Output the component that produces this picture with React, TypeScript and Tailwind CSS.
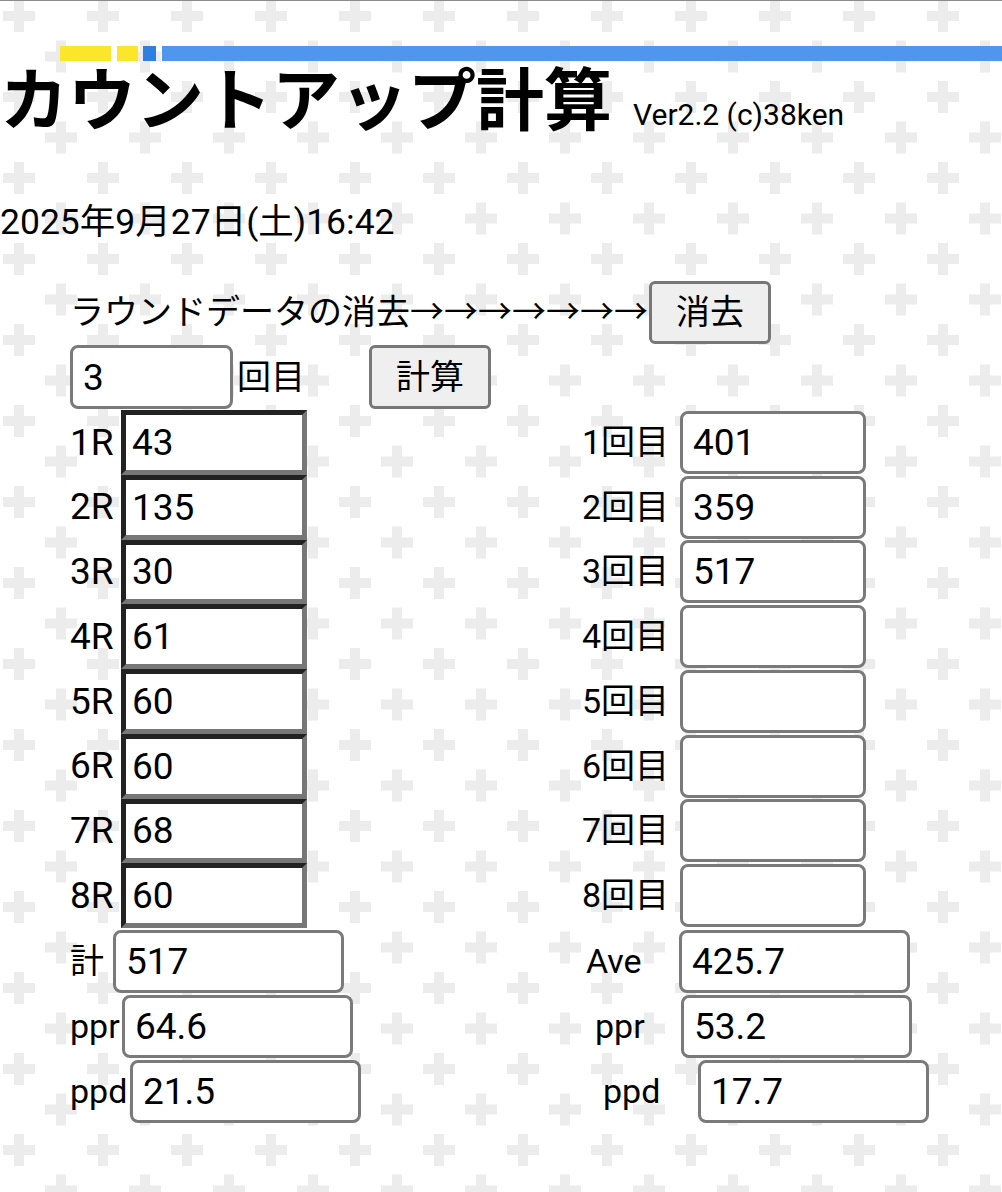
const rounds = ["43", "135", "30", "61", "60", "60", "68", "60"];
const games = ["401", "359", "517", "", "", "", "", ""];

const font = "font-['Roboto','Noto_Sans_CJK_JP',sans-serif]";

function RoundBox({ value }: { value: string }) {
  return (
    <input
      readOnly
      value={value}
      className="box-border h-full w-[186px] border-[5px] border-t-[#222] border-l-[#222] border-r-[#777] border-b-[#777] bg-white pl-[6px] text-[37px] outline-none"
    />
  );
}

function Box({ value, w }: { value: string; w: string }) {
  return (
    <input
      readOnly
      value={value}
      className={`box-border h-[63px] ${w} rounded-[8px] border-[3px] border-[#7a7a7a] bg-white pl-[10px] text-[37px] outline-none`}
    />
  );
}

export default function App() {
  return (
    <div className={`relative min-h-[1192px] overflow-hidden bg-white text-black ${font}`}>
      <svg className="absolute inset-0 h-full w-full" aria-hidden="true">
        <defs>
          <pattern id="plus" width="84" height="81" patternUnits="userSpaceOnUse">
            <rect x="3" y="11" width="32" height="10" fill="#ececec" />
            <rect x="14" y="0" width="10" height="32" fill="#ececec" />
            <rect x="45" y="51.5" width="32" height="10" fill="#ececec" />
            <rect x="56" y="40.5" width="10" height="32" fill="#ececec" />
          </pattern>
        </defs>
        <rect width="100%" height="100%" fill="url(#plus)" />
      </svg>

      <div className="relative">
        <div className="h-px bg-[#8c8c8c]" />

        {/* header stripes */}
        <div className="mt-[45px] flex h-[15px] pl-[60px]">
          <div className="w-[51px] bg-[#fbe62a]" />
          <div className="ml-[6px] w-[21px] bg-[#fbe62a]" />
          <div className="ml-[5px] w-[13px] bg-[#2f7fe3]" />
          <div className="ml-[6px] flex-1 bg-[#5196ee]" />
        </div>

        <div className="mt-px flex items-baseline">
          <h1 className="font-['Noto_Sans_CJK_JP',sans-serif] text-[68px] leading-[67px] font-bold">
            カウントアップ計算
          </h1>
          <span className="ml-[21px] text-[30px]">Ver2.2 (c)38ken</span>
        </div>

        <div className="mt-[65px] text-[35.5px] leading-[40px]">2025年9月27日(土)16:42</div>

        <div className="pl-[70px]">
          <div className="mt-[39px] flex h-[63px] items-center text-[34px]">
            ラウンドデータの消去→→→→→→→
            <button className="ml-[1px] h-[63px] w-[122px] rounded-[6px] border-[3px] border-[#777] bg-[#efefef] text-[34px]">
              消去
            </button>
          </div>

          <div className="mt-px flex h-[64px] items-center text-[34px]">
            <input
              readOnly
              value="3"
              className="box-border h-[64px] w-[163px] rounded-[8px] border-[3px] border-[#7a7a7a] bg-white pl-[10px] text-[37px] outline-none"
            />
            <span className="ml-[4px]">回目</span>
            <button className="ml-[64px] h-[64px] w-[122px] rounded-[6px] border-[3px] border-[#777] bg-[#efefef] text-[34px]">
              計算
            </button>
          </div>

          <div className="mt-px">
            {rounds.map((r, i) => (
              <div key={i} className="flex h-[64.75px]">
                <div className="flex w-[512px] items-center">
                  <span className="w-[51px] text-[37px]">{i + 1}R</span>
                  <RoundBox value={r} />
                </div>
                <div className="flex items-center">
                  <span className="w-[98px] text-[34px]">{i + 1}回目</span>
                  <Box value={games[i]} w="w-[186px]" />
                </div>
              </div>
            ))}
          </div>

          <div className="mt-px">
            <div className="flex h-[65px]">
              <div className="flex w-[512px] items-center">
                <span className="w-[43px] text-[34px]">計</span>
                <Box value="517" w="w-[231px]" />
              </div>
              <div className="flex items-center">
                <span className="w-[97px] pl-[4px] text-[34px]">Ave</span>
                <Box value="425.7" w="w-[231px]" />
              </div>
            </div>
            <div className="flex h-[65px]">
              <div className="flex w-[512px] items-center">
                <span className="w-[52px] text-[34px]">ppr</span>
                <Box value="64.6" w="w-[231px]" />
              </div>
              <div className="flex items-center">
                <span className="w-[99px] pl-[13px] text-[34px]">ppr</span>
                <Box value="53.2" w="w-[231px]" />
              </div>
            </div>
            <div className="flex h-[65px]">
              <div className="flex w-[512px] items-center">
                <span className="w-[60px] text-[34px]">ppd</span>
                <Box value="21.5" w="w-[231px]" />
              </div>
              <div className="flex items-center">
                <span className="w-[116px] pl-[21px] text-[34px]">ppd</span>
                <Box value="17.7" w="w-[231px]" />
              </div>
            </div>
          </div>
        </div>
      </div>
    </div>
  );
}
